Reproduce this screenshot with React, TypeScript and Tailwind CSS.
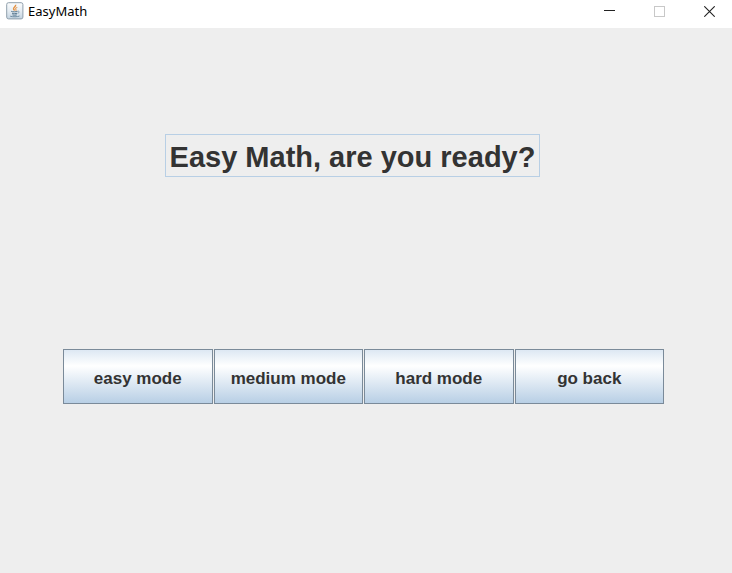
const modes = ['easy mode', 'medium mode', 'hard mode', 'go back'];

function JavaIcon() {
  return (
    <svg width="18" height="18" viewBox="0 0 18 18" fill="none" aria-hidden="true">
      <defs>
        <linearGradient id="tile" x1="0" y1="0" x2="0" y2="1">
          <stop offset="0" stopColor="#fbfcfd" />
          <stop offset="0.5" stopColor="#e6edf3" />
          <stop offset="1" stopColor="#c3d3e0" />
        </linearGradient>
      </defs>
      <rect x="0.7" y="0.7" width="16.2" height="16.2" rx="1.8" fill="url(#tile)" stroke="#8f9fac" />
      <path d="M9.6 2.8c.8 1.8-2.8 2.7-2 4.4.2.5.7.9 1 1.3" stroke="#e39143" strokeWidth="1.4" />
      <path d="M11.3 5.2c-1.8.7-2.2 1.5-1.4 2.3.4.5.1.9-.3 1.2" stroke="#e8a566" strokeWidth="1.2" />
      <path d="M5.2 9.3c1.6.7 4.7.7 6.4 0M6 11.2c1.4.6 3.8.6 5.2 0M6.4 12.9c1.3.4 3.2.4 4.4 0" stroke="#58788f" />
      <path d="M11.9 9.2c1.9-.3 1.6 1.6-.2 2.1" stroke="#6f8da3" strokeWidth="0.8" />
      <path d="M4.2 14.2c2.3.8 7.4.8 9.3-.2" stroke="#6f8da3" />
    </svg>
  );
}

function TitleBar() {
  return (
    <header className="flex h-7 items-start justify-between bg-white">
      <div className="flex items-center gap-1 pt-px pl-1.5">
        <JavaIcon />
        <span className="font-['Noto_Sans',sans-serif] text-[13px] leading-5 font-normal text-black">EasyMath</span>
      </div>
      <div className="flex h-[23px]">
        <button aria-label="Minimize" className="flex w-[50px] items-center justify-center">
          <svg width="11" height="11" viewBox="0 0 11 11">
            <path d="M0 4.5h11" stroke="#222" />
          </svg>
        </button>
        <button aria-label="Maximize" disabled className="flex w-[50px] items-center justify-center">
          <svg width="11" height="11" viewBox="0 0 11 11">
            <rect x="0.5" y="0.5" width="10" height="10" fill="none" stroke="#c8c8c8" />
          </svg>
        </button>
        <button aria-label="Close" className="flex w-12 items-center justify-center pl-0.5">
          <svg width="11" height="11" viewBox="0 0 11 11">
            <path d="M0.3 0.3l10.4 10.4M10.7 0.3L0.3 10.7" stroke="#222" strokeWidth="1.1" />
          </svg>
        </button>
      </div>
    </header>
  );
}

export default function App() {
  return (
    <div className="flex min-h-screen flex-col bg-[#eeeeee] font-['Liberation_Sans',Arial,sans-serif] font-bold text-[#333333]">
      <TitleBar />
      <main className="flex flex-1 flex-col pt-[106px]">
        <div className="flex justify-center pr-[27px]">
          <h1 className="border border-[#b8cfe5] px-1 pt-1 text-[29px] leading-[37px] whitespace-nowrap">
            Easy Math, are you ready?
          </h1>
        </div>
        <div className="mt-[172px] grid grid-cols-4 gap-px pr-[68px] pl-[63px] font-bold">
          {modes.map((mode) => (
            <button
              key={mode}
              className="h-[55px] border border-[#7a8a99] bg-linear-to-b from-[#dde8f3] via-white via-30% to-[#b8cfe5] pt-1 text-[17px] leading-5 whitespace-nowrap"
            >
              {mode}
            </button>
          ))}
        </div>
      </main>
    </div>
  );
}
